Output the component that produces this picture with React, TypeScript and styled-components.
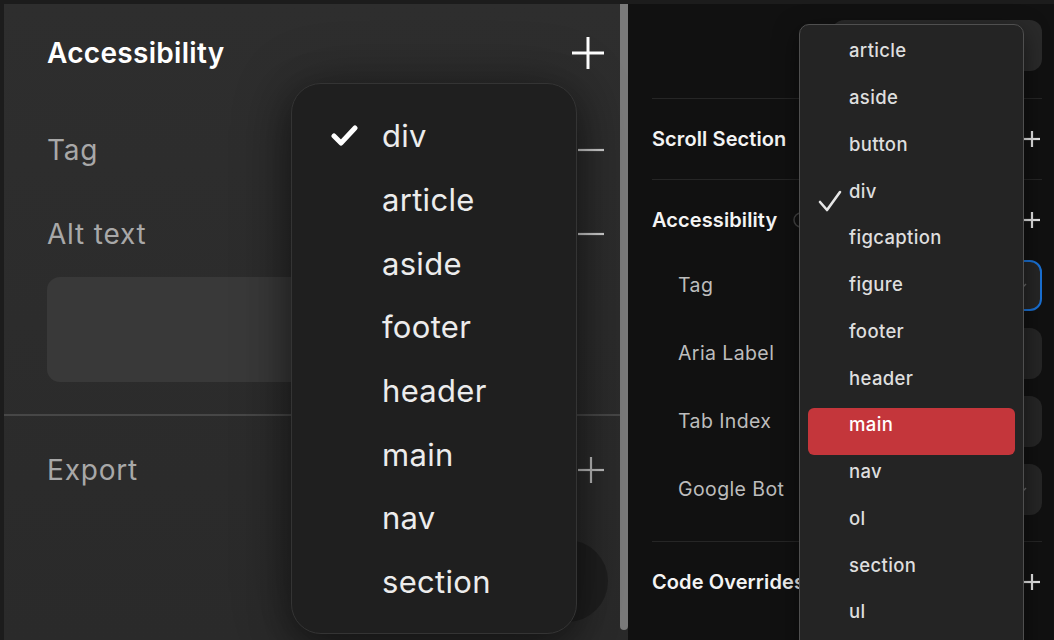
import React from 'react';
import styled, { createGlobalStyle } from 'styled-components';

const Global = createGlobalStyle`
  html, body { margin: 0; padding: 0; background: #1c1c1c; }
  body { font-family: Inter, "Noto Sans", sans-serif; overflow: hidden; }
  * { box-sizing: border-box; }
`;

const Screen = styled.div`
  width: 1054px;
  height: 640px;
  display: flex;
  padding: 4px 0 0 4px;
  overflow: hidden;
  background: #1c1c1c;
`;

/* ---------- Left (zoomed) panel ---------- */
const LeftPanel = styled.div`
  position: relative;
  width: 624px;
  flex: none;
  background: linear-gradient(180deg, #2e2e2e 0%, #2a2a2a 100%);
  display: flex;
  flex-direction: column;
`;

const LeftSection = styled.div`
  display: flex;
  flex-direction: column;
  padding: 0 24px 0 43px;
`;

const LeftRow = styled.div<{ $h: number }>`
  height: ${(p) => p.$h}px;
  display: flex;
  align-items: center;
  justify-content: space-between;
`;

const LeftTitle = styled.span`
  font-size: 28px;
  font-weight: 600;
  color: #ffffff;
  letter-spacing: 0.3px;
`;

const LeftLabel = styled.span`
  font-size: 28px;
  font-weight: 400;
  color: #a8a8a8;
  letter-spacing: 0.8px;
`;

const TextArea = styled.div`
  margin-top: 7px;
  width: 480px;
  height: 105px;
  border-radius: 13px;
  background: #393939;
  margin-bottom: 32px;
`;

const LeftDivider = styled.div`
  height: 2px;
  background: #474747;
  margin-right: 4px;
`;

const CircleRow = styled.div`
  display: flex;
  justify-content: flex-end;
  margin-top: 16px;
  margin-right: -4px;
`;

const CircleButton = styled.div`
  width: 82px;
  height: 82px;
  border-radius: 50%;
  background: #1f1f1f;
`;

const ScrollThumb = styled.div`
  position: absolute;
  right: 0;
  top: 0;
  width: 8px;
  height: 626px;
  background: #7a7a7a;
  border-radius: 0 0 4px 4px;
`;

const BigMenu = styled.div`
  position: absolute;
  left: 287px;
  top: 79px;
  width: 286px;
  height: 551px;
  border-radius: 30px;
  background: #1f1f1f;
  border: 1px solid #343434;
  box-shadow: 0 12px 40px rgba(0, 0, 0, 0.45), 0 0 60px rgba(0, 0, 0, 0.25);
  padding-top: 20px;
  display: flex;
  flex-direction: column;
`;

const BigItem = styled.div`
  height: 63.7px;
  display: flex;
  align-items: center;
  position: relative;
  padding-left: 90px;
  font-size: 31px;
  color: #ececec;
  font-weight: 400;
  letter-spacing: 0.3px;
`;

const BigCheck = styled.svg`
  position: absolute;
  left: 39px;
  top: 50%;
  margin-top: -13px;
`;

/* ---------- Right (real size) panel ---------- */
const RightPanel = styled.div`
  position: relative;
  flex: 1;
  background: #111111;
  padding: 0 12px 0 24px;
  display: flex;
  flex-direction: column;
`;

const TopBox = styled.div`
  margin-top: 16px;
  align-self: flex-end;
  width: 210px;
  height: 51px;
  border-radius: 12px;
  background: #2a2a2a;
`;

const RightDivider = styled.div<{ $mt: number }>`
  margin-top: ${(p) => p.$mt}px;
  height: 1px;
  background: #262626;
`;

const RightHeader = styled.div`
  height: 80px;
  display: flex;
  align-items: center;
  justify-content: space-between;
  padding-right: 2px;
`;

const RightTitle = styled.span`
  font-size: 20px;
  font-weight: 600;
  color: #f4f4f4;
  letter-spacing: 0.1px;
  display: flex;
  align-items: center;
  gap: 16px;
  white-space: nowrap;
`;

const Fields = styled.div`
  display: flex;
  flex-direction: column;
  gap: 17px;
`;

const FieldRow = styled.div`
  height: 51px;
  display: flex;
  align-items: center;
  justify-content: space-between;
  padding-left: 26px;
  padding-bottom: 1px;
`;

const FieldLabel = styled.span`
  font-size: 19.5px;
  color: #bdbdbd;
  font-weight: 400;
  letter-spacing: 0.4px;
`;

const FieldBox = styled.div<{ $focus?: boolean }>`
  width: 180px;
  height: 51px;
  border-radius: 12px;
  background: #262626;
  border: ${(p) => (p.$focus ? '2px solid #1a72d6' : 'none')};
  display: flex;
  align-items: center;
  justify-content: flex-end;
  padding-right: ${(p) => (p.$focus ? 13 : 15)}px;
`;

const SmallMenu = styled.div`
  position: absolute;
  left: 171px;
  top: 20px;
  width: 225px;
  height: 650px;
  background: #242424;
  border: 1px solid #4f4f4f;
  border-radius: 10px;
  padding: 9px 8px 0 8px;
  display: flex;
  flex-direction: column;
  box-shadow: 0 8px 24px rgba(0, 0, 0, 0.5);
`;

const SmallItem = styled.div<{ $active?: boolean }>`
  height: 46.75px;
  flex: none;
  border-radius: 6px;
  position: relative;
  display: flex;
  align-items: center;
  padding-left: 41px;
  padding-bottom: 14px;
  font-size: 18.5px;
  font-weight: 500;
  letter-spacing: 0.35px;
  color: ${(p) => (p.$active ? '#ffffff' : '#dedede')};
  background: ${(p) => (p.$active ? '#c4363b' : 'transparent')};
`;

const SmallCheck = styled.svg`
  position: absolute;
  left: 10px;
  top: 50%;
  margin-top: -8px;
`;

const PlusIcon = ({ size, stroke, color }: { size: number; stroke: number; color: string }) => (
  <svg width={size} height={size} viewBox={`0 0 ${size} ${size}`}>
    <line x1={size / 2} y1={0} x2={size / 2} y2={size} stroke={color} strokeWidth={stroke} />
    <line x1={0} y1={size / 2} x2={size} y2={size / 2} stroke={color} strokeWidth={stroke} />
  </svg>
);

const MinusIcon = ({ width, color }: { width: number; color: string }) => (
  <svg width={width} height={4} viewBox={`0 0 ${width} 4`}>
    <line x1={0} y1={2} x2={width} y2={2} stroke={color} strokeWidth={2.2} />
  </svg>
);

const Chevron = () => (
  <svg width="8" height="5" viewBox="0 0 8 5">
    <polyline points="1,1 4,4 7,1" fill="none" stroke="#6a6a6a" strokeWidth="1.4" />
  </svg>
);

const InfoIcon = () => (
  <svg width="16" height="16" viewBox="0 0 16 16">
    <circle cx="8" cy="8" r="7" fill="none" stroke="#444" strokeWidth="1.5" />
  </svg>
);

const bigItems = ['div', 'article', 'aside', 'footer', 'header', 'main', 'nav', 'section'];
const smallItems = [
  'article', 'aside', 'button', 'div', 'figcaption', 'figure', 'footer',
  'header', 'main', 'nav', 'ol', 'section', 'ul',
];
const fields = ['Tag', 'Aria Label', 'Tab Index', 'Google Bot'];

export default function App() {
  return (
    <>
      <Global />
      <Screen>
        <LeftPanel>
          <LeftSection>
            <LeftRow $h={98}>
              <LeftTitle>Accessibility</LeftTitle>
              <PlusIcon size={32} stroke={3} color="#ffffff" />
            </LeftRow>
            <LeftRow $h={96}>
              <LeftLabel>Tag</LeftLabel>
              <MinusIcon width={26} color="#cfcfcf" />
            </LeftRow>
            <LeftRow $h={72}>
              <LeftLabel>Alt text</LeftLabel>
              <MinusIcon width={26} color="#cfcfcf" />
            </LeftRow>
            <TextArea />
          </LeftSection>
          <LeftDivider />
          <LeftSection>
            <LeftRow $h={108}>
              <LeftLabel>Export</LeftLabel>
              <PlusIcon size={26} stroke={2.2} color="#bdbdbd" />
            </LeftRow>
            <CircleRow>
              <CircleButton />
            </CircleRow>
          </LeftSection>
          <ScrollThumb />
          <BigMenu>
            {bigItems.map((t, i) => (
              <BigItem key={t}>
                {i === 0 && (
                  <BigCheck width="28" height="26" viewBox="0 0 28 26">
                    <polyline
                      points="3,13 10,20 24,5"
                      fill="none"
                      stroke="#ffffff"
                      strokeWidth="5"
                      strokeLinecap="round"
                      strokeLinejoin="round"
                    />
                  </BigCheck>
                )}
                {t}
              </BigItem>
            ))}
          </BigMenu>
        </LeftPanel>

        <RightPanel>
          <TopBox />
          <RightDivider $mt={27} />
          <RightHeader>
            <RightTitle>Scroll Section</RightTitle>
            <PlusIcon size={16} stroke={2.2} color="#e8e8e8" />
          </RightHeader>
          <RightDivider $mt={0} />
          <RightHeader>
            <RightTitle>
              Accessibility
              <InfoIcon />
            </RightTitle>
            <PlusIcon size={16} stroke={2.2} color="#e8e8e8" />
          </RightHeader>
          <Fields>
            {fields.map((f, i) => (
              <FieldRow key={f}>
                <FieldLabel>{f}</FieldLabel>
                <FieldBox $focus={i === 0}>{(i === 0 || i === 3) && <Chevron />}</FieldBox>
              </FieldRow>
            ))}
          </Fields>
          <RightDivider $mt={26} />
          <RightHeader>
            <RightTitle>Code Overrides</RightTitle>
            <PlusIcon size={16} stroke={2.2} color="#e8e8e8" />
          </RightHeader>

          <SmallMenu>
            {smallItems.map((t) => (
              <SmallItem key={t} $active={t === 'main'}>
                {t === 'div' && (
                  <SmallCheck width="24" height="22" viewBox="0 0 24 22">
                    <polyline
                      points="2,12 9,20 22,2"
                      fill="none"
                      stroke="#e6e6e6"
                      strokeWidth="2.6"
                      strokeLinecap="round"
                      strokeLinejoin="round"
                    />
                  </SmallCheck>
                )}
                {t}
              </SmallItem>
            ))}
          </SmallMenu>
        </RightPanel>
      </Screen>
    </>
  );
}
